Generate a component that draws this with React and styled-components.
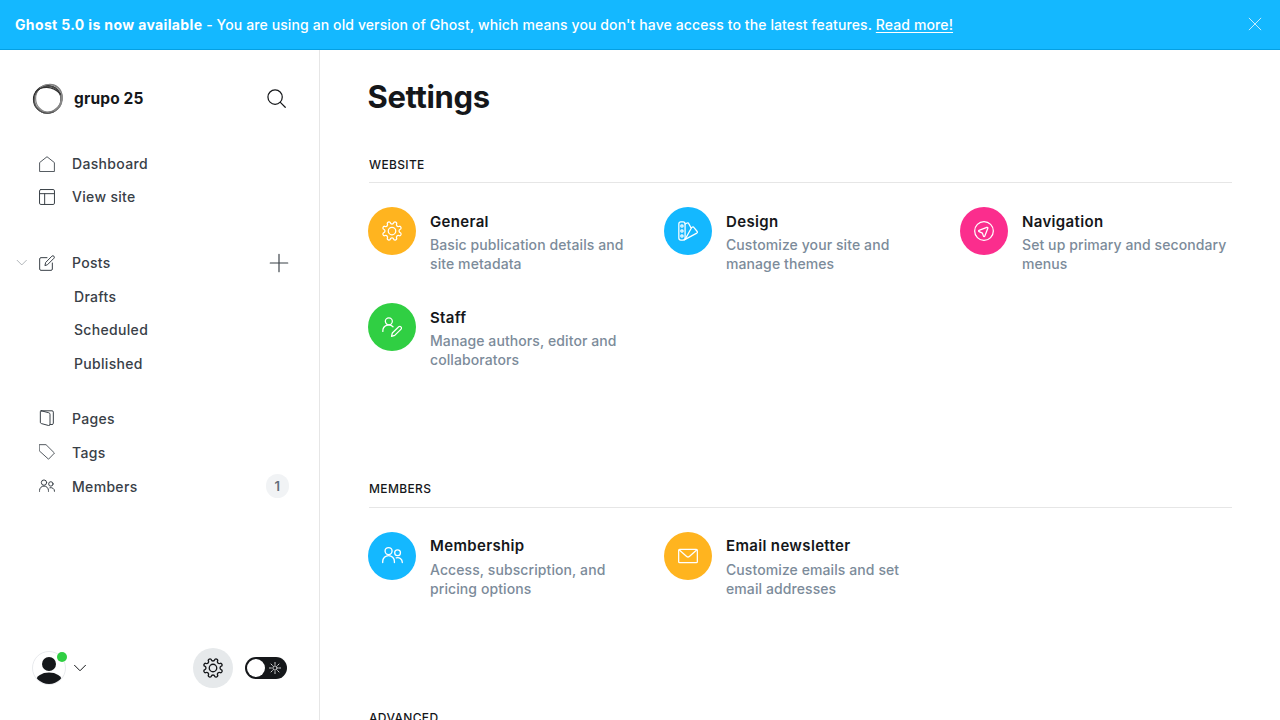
import React from "react";
import styled, { createGlobalStyle } from "styled-components";

const GlobalStyle = createGlobalStyle`
  *, *::before, *::after { box-sizing: border-box; }
  body {
    margin: 0;
    background: #fff;
    color: #15171a;
    font-family: Inter, "Liberation Sans", sans-serif;
    -webkit-font-smoothing: antialiased;
  }
`;

const Page = styled.div`
  display: flex;
  flex-direction: column;
  height: 100vh;
  overflow: hidden;
`;

const Banner = styled.header`
  display: flex;
  flex: none;
  align-items: center;
  justify-content: space-between;
  height: 50px;
  padding: 0 18px 1px 15px;
  border-bottom: 1px solid #05a0e2;
  background: #14b8ff;
  color: #fff;
`;

const BannerText = styled.p`
  margin: 2px 0 0;
  font-size: 14px;
  font-weight: 500;
  letter-spacing: 0.11px;
  line-height: 20px;
  white-space: nowrap;

  strong {
    font-weight: 700;
    letter-spacing: 0.36px;
  }
  a {
    color: inherit;
    text-decoration: underline;
    text-underline-offset: 2px;
    text-decoration-thickness: 1px;
  }
`;

const Body = styled.div`
  display: flex;
  flex: 1;
  min-height: 0;
`;

const Sidebar = styled.nav`
  display: flex;
  flex: none;
  flex-direction: column;
  width: 320px;
  border-right: 1px solid #e6e6e6;
`;

const SiteHeader = styled.div`
  display: flex;
  align-items: center;
  height: 32px;
  margin: 33px 32px 32px;
`;

const SiteName = styled.div`
  flex: 1;
  margin: 0 0 2px 10px;
  font-size: 15.5px;
  font-weight: 700;
  letter-spacing: 0.15px;
`;

const SearchButton = styled.span`
  display: flex;
  margin: 0 0 2px;
`;

const NavGroup = styled.div`
  display: flex;
  flex-direction: column;
  margin-bottom: ${(p) => p.$gap}px;
`;

const NavRow = styled.div`
  display: flex;
  align-items: center;
  height: ${(p) => p.$height || 33.5}px;
  padding: 0 30px 0 ${(p) => (p.$sub ? 74 : p.$expandable ? 15 : 39)}px;
  color: #394047;
  font-size: 14px;
  font-weight: 500;
  letter-spacing: 0.32px;
`;

const NavLabel = styled.span`
  flex: 1;
  margin-left: ${(p) => (p.$sub ? 0 : 17)}px;
`;

const Chevron = styled.span`
  display: flex;
  width: 24px;
  color: #8e959b;
`;

const Count = styled.span`
  display: flex;
  align-items: center;
  justify-content: center;
  width: 23px;
  height: 24px;
  border-radius: 12px;
  background: #f1f3f5;
  color: #626d79;
  font-size: 13px;
  font-weight: 600;
`;

const SidebarFooter = styled.div`
  display: flex;
  align-items: center;
  margin: auto 32px 32px;
`;

const Avatar = styled.div`
  position: relative;
  display: flex;
  width: 34px;
  height: 34px;
  margin-right: 8px;
`;

const StatusDot = styled.span`
  position: absolute;
  top: 1px;
  right: -1px;
  width: 10px;
  height: 10px;
  border-radius: 50%;
  background: #30cf43;
`;

const SettingsButton = styled.button`
  display: flex;
  align-items: center;
  justify-content: center;
  width: 40px;
  height: 40px;
  margin: 0 12px 0 auto;
  padding: 0;
  border: 0;
  border-radius: 50%;
  background: #e6e9eb;
  color: #15171a;
`;

const ThemeToggle = styled.div`
  display: flex;
  align-items: center;
  justify-content: space-between;
  width: 42px;
  height: 22px;
  padding: 0 6px 0 2px;
  border-radius: 11px;
  background: #15171a;
  color: #fff;
`;

const ToggleKnob = styled.span`
  width: 18px;
  height: 18px;
  border-radius: 50%;
  background: #fff;
`;

const Main = styled.main`
  flex: 1;
  min-width: 0;
  padding: 0 48px;
`;

const Title = styled.h1`
  margin: 27px 0 47px -0.5px;
  font-size: 31px;
  font-weight: 700;
  letter-spacing: -0.35px;
  line-height: 40px;
`;

const Section = styled.section`
  padding-bottom: ${(p) => p.$space}px;
`;

const SectionTitle = styled.h2`
  height: 19.3px;
  margin: 0 0 24px 1px;
  border-bottom: 1px solid #e6e6e6;
  font-size: 12px;
  font-weight: 500;
  letter-spacing: 0.35px;
  line-height: 1px;
  text-transform: uppercase;
`;

const Grid = styled.div`
  display: grid;
  grid-template-columns: repeat(3, 1fr);
  grid-auto-rows: 72px;
  gap: 24px;
`;

const Item = styled.div`
  display: flex;
  gap: 14px;
`;

const ItemIcon = styled.span`
  display: flex;
  flex: none;
  align-items: center;
  justify-content: center;
  width: 48px;
  height: 48px;
  border-radius: 50%;
  background: ${(p) => p.$color};
  color: #fff;
`;

const ItemTitle = styled.h4`
  margin: 3.5px 0 3.3px;
  font-size: 15px;
  font-weight: 600;
  letter-spacing: 0.34px;
  line-height: 21px;
  white-space: nowrap;
`;

const ItemText = styled.p`
  margin: 0;
  color: #7c8b9a;
  font-size: 14px;
  font-weight: 500;
  letter-spacing: 0.09px;
  line-height: 19px;
  white-space: pre-line;
`;

const Svg = styled.svg`
  display: block;
  flex: none;
  fill: none;
  stroke: currentColor;
  stroke-width: ${(p) => p.$weight || 1.5};
  stroke-linecap: round;
  stroke-linejoin: round;
`;

const Icon = ({ size = 16, box = 24, weight, children }) => (
  <Svg width={size} height={size} viewBox={`0 0 ${box} ${box}`} $weight={weight}>
    {children}
  </Svg>
);

const polar = (radius, degrees) => {
  const a = (degrees * Math.PI) / 180;
  return `${(12 + radius * Math.sin(a)).toFixed(2)} ${(12 - radius * Math.cos(a)).toFixed(2)}`;
};

// Eight rounded teeth, with a valley at each multiple of 45 degrees.
const gearPath =
  Array.from({ length: 8 }, (_, i) => {
    const a = i * 45;
    return `${i ? "L" : "M"}${polar(10.8, a - 13)} C${polar(7.8, a - 10)} ${polar(7.8, a + 10)} ${polar(10.8, a + 13)} Q${polar(11.6, a + 16)} ${polar(11.6, a + 22.5)} Q${polar(11.6, a + 29)} ${polar(10.8, a + 32)}`;
  }).join(" ") + "Z";

const Gear = (props) => (
  <Icon {...props}>
    <path d={gearPath} />
    <circle cx="12" cy="12" r="4.5" />
  </Icon>
);

const People = (props) => (
  <Icon {...props}>
    <circle cx="7.5" cy="6.9" r="4" />
    <path d="M.8 20v-1.2a6.7 6.7 0 0 1 13.4 0V20" />
    <circle cx="17.8" cy="8.9" r="3.3" />
    <path d="M16.3 14.6a5.3 5.3 0 0 1 6.9 5v.4" />
  </Icon>
);

const Logo = () => (
  <svg width="32" height="32" viewBox="0 0 32 32" fill="none">
    <ellipse cx="15.5" cy="16.4" rx="13.8" ry="13.5" stroke="#222" strokeWidth="1.6" />
    <ellipse cx="16.4" cy="15.3" rx="14.5" ry="13.1" stroke="#777" strokeWidth="1.1" transform="rotate(-48 16.4 15.3)" />
    <ellipse cx="16.9" cy="15.4" rx="13.3" ry="13.9" stroke="#888" strokeWidth="1.2" />
    <ellipse cx="15.5" cy="16.7" rx="13.4" ry="13.9" stroke="#555" strokeWidth="0.9" transform="rotate(40 15.5 16.7)" />
    <path d="M3.5 9C9 3 20 2 28.5 11" stroke="#333" strokeWidth="1.1" />
    <path d="M29.4 12c1 7-2 12.5-7.3 15.5" stroke="#888" strokeWidth="2" />
  </svg>
);

const icons = {
  home: (
    <Icon weight={1.3}>
      <path d="M.9 22.7V9.9L12 1.1l11.1 8.8v12.8Z" />
    </Icon>
  ),
  layout: (
    <Icon>
      <rect x=".8" y=".8" width="22.4" height="22.4" rx="2" />
      <path d="M.8 7h22.4M8.5 7v16.2" />
    </Icon>
  ),
  posts: (
    <Icon>
      <path d="M12 4H3a2 2 0 0 0-2 2v15a2 2 0 0 0 2 2h15a2 2 0 0 0 2-2v-9" />
      <path d="m9 15.3 1-4.1L19.4 1.7a2.2 2.2 0 0 1 3.1 3.1L13.1 14.2Z" />
    </Icon>
  ),
  pages: (
    <Icon>
      <path d="M3.3 1.2h16.2a2 2 0 0 1 2 2v16.6a2 2 0 0 1-2 2h-3.2" />
      <path d="m3.3 1.2 11.3 2.9a2.4 2.4 0 0 1 1.9 2.3v15.4c0 1.2-.9 1.8-2 1.5l-11.1-3a2 2 0 0 1-1.4-1.9V2.5c0-.7.6-1.3 1.3-1.3Z" />
    </Icon>
  ),
  tags: (
    <Icon weight={1.3}>
      <path d="M.8 1h9.7l12.7 12.6-8.9 9.2L.8 10.6Z" />
    </Icon>
  ),
  members: <People />,
};

const Sun = () => (
  <Icon size={12} weight={1.6}>
    <circle cx="12" cy="12" r="4.2" />
    <path d="M12 .8v4M12 19.2v4M.8 12h4M19.2 12h4M4 4l2.8 2.8M17.2 17.2 20 20M20 4l-2.8 2.8M6.8 17.2 4 20" />
  </Icon>
);

const sections = [
  {
    title: "Website",
    space: 113.2,
    items: [
      { name: "General", text: "Basic publication details and\nsite metadata", color: "#ffb41f", icon: <Gear size={20} /> },
      {
        name: "Design",
        text: "Customize your site and\nmanage themes",
        color: "#14b8ff",
        icon: (
          <Icon size={20}>
            <rect x="1" y="1" width="7.5" height="22" rx="2.5" />
            <circle cx="4.75" cy="6" r="1.4" />
            <circle cx="4.75" cy="12" r="1.4" />
            <circle cx="4.75" cy="18" r="1.4" />
            <path d="m8.5 3.6 2.6-1.2a1.4 1.4 0 0 1 1.8.7l3 5.6L8.5 22" />
            <path d="m15.9 8.2 1.5-.9a1.2 1.2 0 0 1 1.6.4l4 4.9a1.4 1.4 0 0 1-.4 1.9L7.5 22.7" />
          </Icon>
        ),
      },
      {
        name: "Navigation",
        text: "Set up primary and secondary\nmenus",
        color: "#fb2d8d",
        icon: (
          <Icon size={20}>
            <circle cx="12" cy="12" r="11.2" />
            <path d="m6 11.2 9.4-3.6c.8-.3 1.5.4 1.2 1.2L13 18c-.3.8-1.4.8-1.7 0l-1.2-3.5-4-1.7c-.8-.3-.9-1.3-.1-1.6Z" />
          </Icon>
        ),
      },
      {
        name: "Staff",
        text: "Manage authors, editor and\ncollaborators",
        color: "#30cf43",
        icon: (
          <Icon size={20}>
            <circle cx="8.2" cy="5.2" r="4.2" />
            <path d="M1 17.3v-.6a7.1 7.1 0 0 1 12.2-5" />
            <path d="m11.4 23.2 1-4 7.7-7.5a2 2 0 0 1 2.8 2.8l-7.6 7.6Z" />
          </Icon>
        ),
      },
    ],
  },
  {
    title: "Members",
    space: 113.5,
    items: [
      { name: "Membership", text: "Access, subscription, and\npricing options", color: "#14b8ff", icon: <People size={21} /> },
      {
        name: "Email newsletter",
        text: "Customize emails and set\nemail addresses",
        color: "#ffb41f",
        icon: (
          <Icon size={20}>
            <rect x=".8" y="4" width="22.4" height="16" rx="1.2" />
            <path d="m1.6 4.8 8.8 7.7a2.4 2.4 0 0 0 3.2 0l8.8-7.7" />
          </Icon>
        ),
      },
    ],
  },
  { title: "Advanced", space: 0, items: [] },
];

const NavItem = ({ icon, label, height }) => (
  <NavRow $height={height}>
    {icons[icon]}
    <NavLabel>{label}</NavLabel>
    {label === "Members" && <Count>1</Count>}
  </NavRow>
);

export default function App() {
  return (
    <Page>
      <GlobalStyle />
      <Banner>
        <BannerText>
          <strong>Ghost 5.0 is now available</strong> - You are using an old version of Ghost, which means you
          don't have access to the latest features. <a>Read more!</a>
        </BannerText>
        <Icon size={14} weight={1.3}>
          <path d="m2 2 20 20M22 2 2 22" />
        </Icon>
      </Banner>
      <Body>
        <Sidebar>
          <SiteHeader>
            <Logo />
            <SiteName>grupo 25</SiteName>
            <SearchButton>
              <Icon size={21} weight={1.4}>
                <circle cx="10.4" cy="10.4" r="8.2" />
                <path d="m16.4 16.4 5.6 5.6" />
              </Icon>
            </SearchButton>
          </SiteHeader>
          <NavGroup $gap={33}>
            <NavItem icon="home" label="Dashboard" height={33} />
            <NavItem icon="layout" label="View site" height={33} />
          </NavGroup>
          <NavGroup $gap={21}>
            <NavRow $expandable>
              <Chevron>
                <Icon size={13} weight={1.3}>
                  <path d="m4 8 8.5 8.5L21 8" />
                </Icon>
              </Chevron>
              {icons.posts}
              <NavLabel>Posts</NavLabel>
              <Icon size={20} weight={1.4}>
                <path d="M12 1.5v21M1.5 12h21" />
              </Icon>
            </NavRow>
            {["Drafts", "Scheduled", "Published"].map((label) => (
              <NavRow $sub key={label}>
                <NavLabel $sub>{label}</NavLabel>
              </NavRow>
            ))}
          </NavGroup>
          <NavGroup $gap={0}>
            <NavItem icon="pages" label="Pages" height={34} />
            <NavItem icon="tags" label="Tags" height={34} />
            <NavItem icon="members" label="Members" height={34} />
          </NavGroup>
          <SidebarFooter>
            <Avatar>
              <svg width="34" height="34" viewBox="0 0 34 34">
                <clipPath id="avatar-clip">
                  <circle cx="17" cy="17" r="16" />
                </clipPath>
                <circle cx="17" cy="17" r="16.5" fill="#fff" stroke="#e8eaed" />
                <g fill="#15171a" clipPath="url(#avatar-clip)">
                  <circle cx="17" cy="13" r="7" />
                  <ellipse cx="17" cy="30" rx="13" ry="8.4" />
                </g>
              </svg>
              <StatusDot />
            </Avatar>
            <Icon size={12} weight={2}>
              <path d="m1 6.5 11 11 11-11" />
            </Icon>
            <SettingsButton aria-label="Settings">
              <Gear size={20} weight={1.6} />
            </SettingsButton>
            <ThemeToggle>
              <ToggleKnob />
              <Sun />
            </ThemeToggle>
          </SidebarFooter>
        </Sidebar>
        <Main>
          <Title>Settings</Title>
          {sections.map((section) => (
            <Section key={section.title} $space={section.space}>
              <SectionTitle>{section.title}</SectionTitle>
              <Grid>
                {section.items.map((item) => (
                  <Item key={item.name}>
                    <ItemIcon $color={item.color}>{item.icon}</ItemIcon>
                    <div>
                      <ItemTitle>{item.name}</ItemTitle>
                      <ItemText>{item.text}</ItemText>
                    </div>
                  </Item>
                ))}
              </Grid>
            </Section>
          ))}
        </Main>
      </Body>
    </Page>
  );
}
